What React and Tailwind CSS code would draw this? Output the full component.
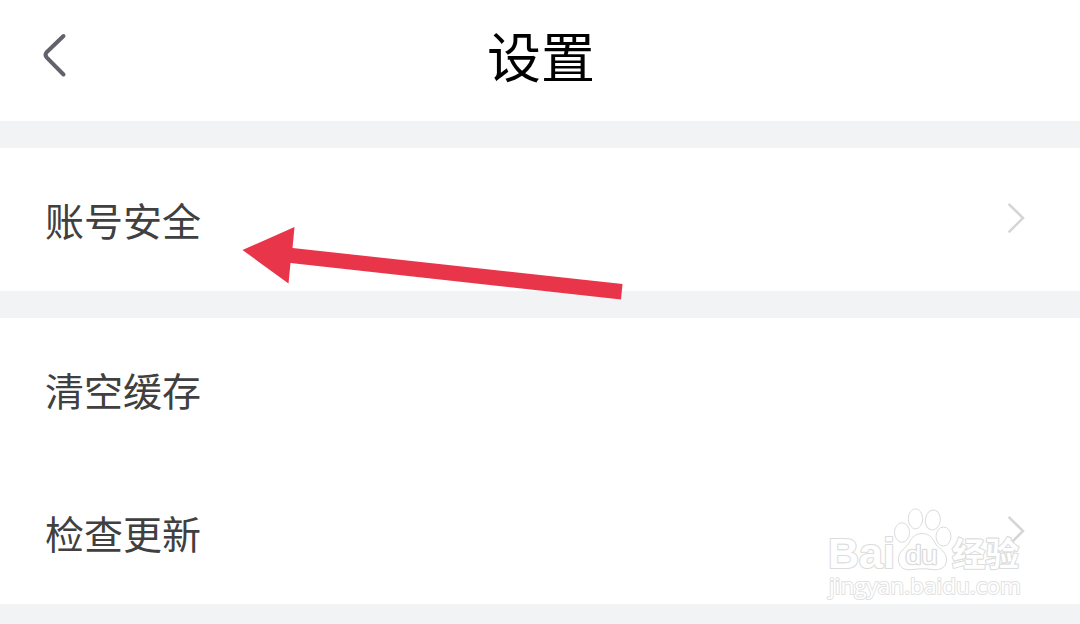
const ChevronRight = () => (
  <svg className="mb-[3px] h-8 w-5" viewBox="0 0 20 32" fill="none" stroke="#d6d6d6" strokeWidth="2.6">
    <path d="M2.6 1.9 L17 16 L2.6 30.4" />
  </svg>
);

const Row = ({ label, arrow }) => (
  <div className="flex h-[143px] items-center justify-between bg-white pl-[45px] pr-[54px]">
    <span className="text-[39px] leading-none text-[#404040]">{label}</span>
    {arrow && <ChevronRight />}
  </div>
);

const Pointer = () => (
  <svg className="absolute left-[240px] top-[224px]" width="386" height="78" viewBox="240 224 386 78">
    <path
      d="M242.5 250 L294.5 227 L292.5 248 L622.5 284 L621 299.5 L290.5 263 L288.5 283.5 Z"
      fill="#e93549"
    />
  </svg>
);

const Watermark = () => (
  <svg
    className="absolute left-[820px] top-[500px]"
    width="210"
    height="106"
    viewBox="820 500 210 106"
    fill="#ffffff"
    stroke="#dcdcdc"
    strokeWidth="1"
    strokeLinejoin="round"
  >
    <text
      x="828"
      y="568"
      fontFamily="Liberation Sans, sans-serif"
      fontWeight="700"
      fontSize="43"
      strokeWidth="2.2"
      paintOrder="stroke"
      textLength="67"
      lengthAdjust="spacingAndGlyphs"
    >
      Bai
    </text>
    <ellipse cx="902" cy="532.5" rx="7.5" ry="9.7" />
    <ellipse cx="915.5" cy="518.8" rx="7.2" ry="10" />
    <ellipse cx="932.8" cy="520" rx="7.5" ry="10" transform="rotate(8 932.8 520)" />
    <ellipse cx="943.5" cy="536.5" rx="7.5" ry="9.5" />
    <path d="M922 533.5 C929 533.5 933 538 935 543 C937 548 947 551 946.5 560 C946 568 940 570.5 932 569.5 C925 568.5 920 568.5 913 569.5 C904 571 898 567 898.5 558.5 C899 550 907 548 909.5 542 C912 537 916 533.5 922 533.5 Z" />
    <text
      x="905.5"
      y="563.5"
      fontFamily="Liberation Sans, sans-serif"
      fontSize="26"
      strokeWidth="2.6"
      paintOrder="stroke"
      textLength="32"
      lengthAdjust="spacingAndGlyphs"
    >
      du
    </text>
    <text
      x="952"
      y="565.5"
      fontFamily="Noto Sans CJK SC, sans-serif"
      fontWeight="700"
      fontSize="33"
      strokeWidth="2.2"
      paintOrder="stroke"
      textLength="67"
      lengthAdjust="spacingAndGlyphs"
    >
      经验
    </text>
    <text
      x="829"
      y="594"
      fontFamily="Open Sans, sans-serif"
      fontSize="22.5"
      strokeWidth="2"
      stroke="#e2e2e2"
      paintOrder="stroke"
      textLength="192"
      lengthAdjust="spacingAndGlyphs"
    >
      jingyan.baidu.com
    </text>
  </svg>
);

const App = () => {
  return (
    <div className="relative h-[624px] w-[1080px] overflow-hidden bg-[#f2f3f5] font-['Noto_Sans_CJK_SC',sans-serif]">
      <div className="flex flex-col gap-[27px]">
        <header className="grid h-[121px] grid-cols-3 items-center bg-white">
          <svg
            className="mb-[12px] ml-[40px] h-[48px] w-[30px]"
            viewBox="0 0 30 48"
            fill="none"
            stroke="#62636a"
            strokeWidth="4"
            strokeLinecap="round"
            strokeLinejoin="round"
          >
            <path d="M23.5 5 L6.6 21.3 Q4.5 24 6.6 26.3 L23.5 43.5" />
          </svg>
          <h1 className="mb-[11px] pl-[2px] text-center text-[54px] leading-none text-black">设置</h1>
        </header>
        <section>
          <Row label="账号安全" arrow />
        </section>
        <section>
          <Row label="清空缓存" />
          <Row label="检查更新" arrow />
        </section>
      </div>
      <Pointer />
      <Watermark />
    </div>
  );
};

export default App;
